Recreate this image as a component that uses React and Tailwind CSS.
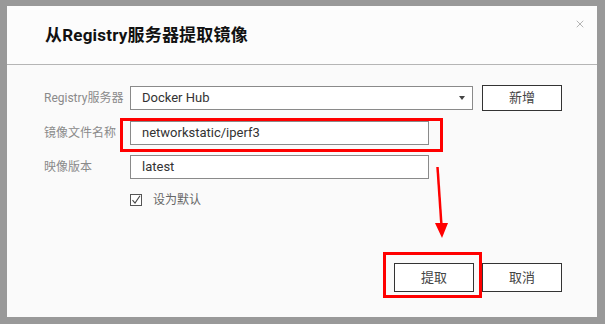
import { X } from "lucide-react";

const font = { fontFamily: 'Roboto, "Noto Sans CJK SC", sans-serif' };

function Label({ children }) {
  return <div className="w-[86px] shrink-0 text-[12px] text-[#8a8a8a] leading-none">{children}</div>;
}

export default function App() {
  return (
    <div className="relative w-[605px] h-[324px] bg-[#999999] pt-[6px] pl-[7px] pr-[8px] pb-[7px]" style={font}>
      <div className="relative w-full h-full bg-[#fafafa] flex flex-col">
        <div className="h-[59px] shrink-0 border-b border-[#b5b5b5] bg-[#fcfcfc] flex items-center pl-[38px]">
          <h1 className="text-[17px] font-bold text-[#111] tracking-[0.2px] mt-[2px]">从Registry服务器提取镜像</h1>
          <button className="absolute right-[11px] top-[12px] text-[#8c8c8c]">
            <X size={12} strokeWidth={1.3} />
          </button>
        </div>

        <div className="flex flex-col pl-[37px] pt-[20px] gap-[10px]">
          <div className="flex items-center h-[26px]">
            <Label>Registry服务器</Label>
            <div className="w-[343px] h-[24px] border border-[#8a8a8a] bg-white flex items-center justify-between pl-[11px] pr-[7px] text-[13px] text-[#333]">
              <span>Docker Hub</span>
              <span className="w-0 h-0 border-l-[3px] border-r-[3px] border-t-[4px] border-l-transparent border-r-transparent border-t-[#444]" />
            </div>
            <button className="ml-[9px] w-[80px] h-[26px] border border-[#333] bg-white text-[13px] text-[#444]">新增</button>
          </div>
          <div className="flex items-center h-[24px]">
            <Label>镜像文件名称</Label>
            <div className="w-[299px] h-[24px] border border-[#8a8a8a] bg-white flex items-center pl-[11px] text-[13px] text-[#333]">
              networkstatic/iperf3
            </div>
          </div>
          <div className="flex items-center h-[24px]">
            <Label>映像版本</Label>
            <div className="w-[299px] h-[24px] border border-[#8a8a8a] bg-white flex items-center pl-[11px] text-[13px] text-[#333]">
              latest
            </div>
          </div>
          <div className="flex items-center h-[22px] pl-[86px]">
            <span className="w-[12px] h-[12px] border border-[#555] bg-white flex items-center justify-center">
              <svg width="10" height="10" viewBox="0 0 10 10">
                <path d="M1.5 5.2 L4 8 L9 0.8" fill="none" stroke="#444" strokeWidth="1.1" />
              </svg>
            </span>
            <span className="ml-[11px] text-[12px] text-[#666]">设为默认</span>
          </div>
        </div>

        <div className="mt-auto flex justify-end gap-[8px] pr-[35px] pb-[25px]">
          <button className="w-[80px] h-[29px] border border-[#333] bg-white text-[13px] text-[#444]">提取</button>
          <button className="w-[80px] h-[29px] border border-[#333] bg-white text-[13px] text-[#444]">取消</button>
        </div>
      </div>

      {/* red annotations */}
      <div className="absolute left-[120px] top-[118px] w-[323px] h-[34px] border-[3px] border-[#ff0000]" />
      <div className="absolute left-[383px] top-[252px] w-[99px] h-[46px] border-[3px] border-[#ff0000]" />
      <svg className="absolute left-0 top-0" width="605" height="324">
        <line x1="437.5" y1="167" x2="441.5" y2="226" stroke="#ff0000" strokeWidth="2.5" />
        <polygon points="435,223 448,223 442,238" fill="#ff0000" />
      </svg>
    </div>
  );
}
